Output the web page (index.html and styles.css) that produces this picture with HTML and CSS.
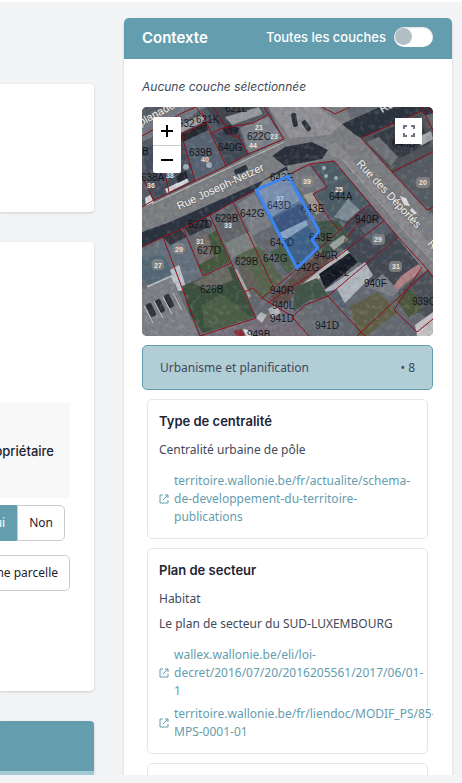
FILE: index.html
```html
<!DOCTYPE html>
<html lang="fr">
<head>
<meta charset="utf-8">
<meta name="viewport" content="width=device-width, initial-scale=1">
<title>Contexte</title>
<link rel="stylesheet" href="styles.css">
</head>
<body>
<div class="app">
  <main class="main">
    <section class="card card-summary"></section>
    <section class="card card-form">
      <div class="form-head">Propriétaire</div>
      <div class="choice">
        <button type="button" class="btn btn-on">Oui</button>
        <button type="button" class="btn btn-off">Non</button>
      </div>
      <button type="button" class="btn btn-add">Ajouter une parcelle</button>
    </section>
    <section class="card card-next"></section>
  </main>

  <aside class="panel">
    <header class="panel-head">
      <h2 class="panel-title">Contexte</h2>
      <label class="toggle">Toutes les couches <input type="checkbox" class="switch"></label>
    </header>
    <div class="panel-body">
      <p class="empty">Aucune couche sélectionnée</p>
      <div class="map">
        <svg class="map-view" viewBox="142 107 291 229" preserveAspectRatio="xMidYMid slice" role="img" aria-label="Carte des parcelles">
          <defs>
            <filter id="grain" x="0" y="0" width="100%" height="100%">
              <feTurbulence type="fractalNoise" baseFrequency="0.22" numOctaves="3" seed="7"/>
              <feColorMatrix values="0 0 0 0 0.05  0 0 0 0 0.06  0 0 0 0 0.08  2.4 0 0 0 -1.05"/>
            </filter>
            <filter id="glow" x="0" y="0" width="100%" height="100%">
              <feTurbulence type="fractalNoise" baseFrequency="0.2" numOctaves="3" seed="21"/>
              <feColorMatrix values="0 0 0 0 .8  0 0 0 0 .82  0 0 0 0 .84  0 2.4 0 0 -1.2"/>
            </filter>
            <filter id="soft"><feGaussianBlur stdDeviation="0.6"/></filter>
          </defs>
          <rect x="142" y="107" width="291" height="229" fill="#656a72"/>
          <g filter="url(#soft)">
            <!-- block north of Rue Joseph-Netzer -->
            <path fill="#555b66" d="M142 107H268L284 139 142 206z"/>
            <path fill="#737982" d="M142 118L170 107H205L180 124 142 142z"/>
            <path fill="#454e5c" d="M142 150L180 134 195 181 152 201z"/>
            <path fill="#596473" d="M184 138L207 128 226 166 196 180z"/>
            <path fill="#25272d" d="M178 135L206 122 208 130 183 142z"/>
            <path fill="#a7a5a3" d="M176 128L202 114 205 121 180 133z"/>
            <path fill="#3f4855" d="M213 134L238 127 247 154 227 165z"/>
            <path fill="#7d838a" d="M240 128L268 116 283 139 249 153z"/>
            <path fill="#42474f" d="M206 107H262L264 114 220 129z"/>
            <path fill="#969a9e" d="M225 117L259 107 263 114 232 125z"/>
            <path fill="#222630" d="M222 128l8-3 9 3-2 6-11 1z"/>
            <path fill="#d8dadd" d="M165 189L187 178 189 182 167 193zM145 198l5-3 4 7-8 4z"/>
            <path fill="#24272e" d="M176 176l10-5 2 7-10 5z"/>
            <!-- streets -->
            <path fill="#7d7e82" d="M142 208L284 139 268 107H345L361 138 433 217V286L398 237 334 161 304 166 257 189 142 246z"/>
            <path fill="#929196" d="M268 107H318L342 124 330 135 290 138z"/>
            <path fill="#8b8a8e" d="M318 150L336 142 433 247V262L370 190 342 160z"/>
            <path fill="#2c313c" d="M342 124L380 107H433V113L361 138 354 134z"/>
            <path fill="#2a2f3a" d="M272 156L285 147 312 142 328 150 322 159 285 166z"/>
            <path fill="#2b323f" d="M142 232L170 222 204 207 262 181 287 166 288 170 256 190 210 215 163 237 142 247z"/>
            <path fill="#8b8e92" d="M263 181L286 170 288 175 257 189z"/>
            <path stroke="#c2c2c2" fill="none" d="M152 204L284 142"/>
            <path stroke="#a6a6a8" fill="none" d="M343 160L402 228 433 262"/>
            <!-- block east -->
            <path fill="#4f5259" d="M361 138L422 111 433 129V214L392 172z"/>
            <path fill="#353b45" d="M372 136L418 116 430 143 396 160z"/>
            <path fill="#6f7278" d="M367 142l12-5 19 20-7 9z"/>
            <path fill="#a7aaad" d="M416 138l15-7 2 8-12 7z"/>
            <path fill="#575c63" d="M394 173L433 153V208L426 209z"/>
            <!-- central roofs -->
            <path fill="#72767c" d="M288 176L308 165 326 187 313 195 318 212z"/>
            <path fill="#a09b93" d="M303 195l10-3 9 18-6 5z"/>
            <path fill="#4e5d66" d="M311 165L334 161 370 203 346 224 328 216 314 194 327 187z"/>
            <path fill="#7f8d97" d="M334 217l14-18 12 11-13 11z"/>
            <path fill="#434a55" d="M346 222L370 204 398 237 360 263 338 245z"/>
            <path fill="#434953" d="M362 252L397 238 420 265 386 292 360 276z"/>
            <path fill="#59616d" d="M360 228l22-10 10 13-19 15z"/>
            <path fill="#b48385" d="M392 290C398 276 409 270 419 264l3 5c-8 10-18 13-25 23z"/>
            <path fill="#4b5158" d="M397 292L428 270 433 276V320L408 308z"/>
            <!-- terrace south of the street -->
            <path fill="#7b7f86" d="M237 204L255 194 272 225 252 236z"/>
            <path fill="#62656b" d="M213 217L233 205 248 236 224 243z"/>
            <path fill="#8e939a" d="M256 191L288 176 301 200 270 218z"/>
            <path fill="#3d4a61" d="M271 219L300 204 308 219 281 236z"/>
            <path fill="#a3acb6" d="M279 233L306 220 308 225 283 241z"/>
            <path fill="#41586a" d="M282 242L308 226 317 236 316 247 297 266z"/>
            <path fill="#4b5f4e" d="M271 252l12-8 13 22-8 8z"/>
            <!-- gardens -->
            <path fill="#42544a" d="M312 222l26-2 14 21-26 14-8-8 2-14z"/>
            <path fill="#9aa3a0" d="M329 245l14-10 5 4-14 11z"/>
            <path fill="#5f504b" d="M268 299L319 252 332 257 284 306z"/>
            <path fill="#b9bbb9" d="M301 285L346 249 350 253 306 290z"/>
            <path fill="#181d25" d="M319 274L349 253 358 262 325 289z"/>
            <path fill="#b1b7bf" d="M322 292L365 262 373 275 345 303 336 290z"/>
            <path fill="#59636f" d="M328 292l9-3 11 20-6-1z"/>
            <path fill="#425546" d="M295 287l22-9 12 19-20 3-16 12z"/>
            <path fill="#61614a" d="M349 307L378 292 398 312 367 336H359z"/>
            <path fill="#7b8086" d="M365 287l18-13 16 17-7 6-14-6z"/>
            <path fill="#6a6f76" d="M292 317L310 305 333 327 332 336H305z"/>
            <path fill="#4d583e" d="M396 300l17-10 10 18-14 10z"/>
            <path fill="#c5c3c6" d="M415 325l18-13v24h-16z"/>
            <!-- parcels to the south-west -->
            <path fill="#65717d" d="M142 252L163 239 182 228 204 275 172 291 142 281z"/>
            <path fill="#536775" d="M142 260L163 254 172 273 149 284 142 278z"/>
            <path fill="#34363d" d="M163 237L180 228 187 237 170 245zM184 228L206 217 210 226 190 236z"/>
            <path fill="#83705f" d="M190 240l16-7 10 22-16 8z" opacity=".5"/>
            <path fill="#45583e" d="M208 235L217 230 230 262 203 275 198 265 214 257z"/>
            <path fill="#bfc6cc" d="M170 270L179 265 187 290 178 291zM147 286l25-11 3 8-24 10z"/>
            <path fill="#3b513d" d="M182 286L205 277 232 266 255 317 203 333 190 315z"/>
            <path fill="#6b6a62" d="M192 283L228 267 233 280 208 290z"/>
            <path fill="#4e5f46" d="M202 306l18-12 16 10 14 13-31 13-15-4z"/>
            <path fill="#586650" d="M236 256L259 245 283 279 266 298 246 290z"/>
            <path fill="#7c8381" d="M225 243l25-12 7 15-25 12z"/>
            <path fill="#64625a" d="M237 262l7-4 17 31-10 4z"/>
            <path fill="#a4a7a9" d="M234 270l3-1 14 27-2 2z"/>
            <path fill="#7e8086" d="M142 290L171 277 199 336H142z"/>
            <g fill="#2c3139">
              <rect x="148" y="303" width="6" height="14" rx="2" transform="rotate(-25 151 310)"/>
              <rect x="157" y="299" width="6" height="14" rx="2" transform="rotate(-25 160 306)"/>
              <rect x="166" y="294" width="6" height="14" rx="2" transform="rotate(-25 169 301)"/>
              <rect x="292" y="113" width="5" height="14" rx="2" transform="rotate(-10 294 120)"/>
              <rect x="304" y="120" width="5" height="12" rx="2" transform="rotate(-35 306 126)"/>
              <rect x="234" y="167" width="14" height="6" rx="2" transform="rotate(-25 241 170)"/>
            </g>
            <path stroke="#c8c8ca" fill="none" d="M144 306l9 17M154 301l9 17M163 297l9 17M173 293l9 17"/>
            <path fill="#74707a" d="M205 333L256 318 290 302 306 336H205z"/>
            <path fill="#b5b7ba" d="M256 318l5-6 6 3-5 8zM268 309l8-4 5 8-9 4z"/>
            <path fill="#8c2c36" d="M234 331l7-2 4 6-8 3z"/>
            <path fill="#dfe1e5" d="M400 196l6 2 4 8-6-1zM412 208l5 5-3 2-4-5zM243 329l5 1 5 6h-7z"/>
            <g fill="#9fadb9"><circle cx="324" cy="168" r="2"/><circle cx="326" cy="176" r="2"/><circle cx="336" cy="178" r="2"/><circle cx="186" cy="167" r="3"/><circle cx="209" cy="165" r="3"/></g>
          </g>
          <rect x="142" y="107" width="291" height="229" filter="url(#grain)" opacity=".18"/>
          <rect x="142" y="107" width="291" height="229" filter="url(#glow)" opacity=".18"/>

          <g class="bounds">
            <path d="M142 136L182 113 196 107M142 176L154 201M142 207L152 201 195 181 226 166 248 154 284 139 264 107M155 130L169 192M180 130L195 181M202 113L226 166M238 136L248 154M176 137L213 119M210 134L223 128 253 123 268 115M196 107L202 116M213 107L232 136H240"/>
            <path d="M142 247L163 237 183 228 210 215 233 202 256 190M292 173L310 164 334 161 370 204 398 237 428 270 433 277M310 164L327 187 313 194 328 217 340 231M370 204L355 215"/>
            <path d="M322 107L335 114 350 107M361 138L422 111M422 107L433 131M361 138L392 172 427 210 433 207M392 172L433 152M427 107L433 113"/>
            <path d="M163 237L200 336 256 318 210 215M183 228L203 276 231 263M233 202L273 286M244 292L253 288 262 298 290 275 357 215M262 298L290 315M268 303L340 255 385 220M292 317L305 305 328 296 398 237M292 317L309 336M328 296L360 331 365 336M357 336L428 270M422 267L394 310 417 332 433 319M367 213L344 241"/>
          </g>

          <g class="badges">
            <rect x="301" y="176" width="13" height="11" rx="4"/><rect x="416" y="177" width="14" height="11" rx="4"/>
            <rect x="152" y="259" width="12" height="11" rx="4"/><rect x="173" y="243" width="12" height="11" rx="4"/>
            <rect x="372" y="234" width="13" height="11" rx="4"/><rect x="389" y="261" width="13" height="11" rx="4"/>
          </g>
          <g class="numbers">
            <text x="307" y="184">39</text><text x="423" y="185">20</text><text x="158" y="268">27</text>
            <text x="179" y="252">29</text><text x="200" y="244">31</text><text x="228" y="228">33</text>
            <text x="378" y="242">29</text><text x="396" y="269">31</text><text x="205" y="162">40</text>
            <text x="170" y="178">38</text><text x="151" y="188">36</text><text x="253" y="148">44</text>
            <text x="259" y="130">21</text><text x="274" y="139">23</text><text x="339" y="192">25</text>
            <text x="280" y="201">37</text>
          </g>
          <g class="parcel-labels">
            <text x="225" y="112">621L</text><text x="196" y="123">621K</text><text x="178" y="127">632</text>
            <text x="247" y="140">622C</text><text x="189" y="156">639B</text><text x="218" y="151">640G</text>
            <text x="142" y="155">B</text><text x="141" y="181">638A</text><text x="270" y="181">643E</text>
            <text x="267" y="209">643D</text><text x="240" y="217">642G</text><text x="215" y="222">629B</text>
            <text x="188" y="228">627D</text><text x="197" y="254">627D</text><text x="235" y="265">629B</text>
            <text x="263" y="262">642G</text><text x="200" y="293">626B</text><text x="270" y="246">643D</text>
            <text x="301" y="212">643E</text><text x="329" y="200">644A</text><text x="355" y="223">940R</text>
            <text x="309" y="241">643E</text><text x="314" y="259">940R</text><text x="295" y="271">642G</text>
            <text x="327" y="276">940L</text><text x="364" y="287">940F</text><text x="270" y="294">940R</text>
            <text x="272" y="309">940L</text><text x="270" y="322">941D</text><text x="315" y="329">941D</text>
            <text x="412" y="305">939C</text><text x="247" y="338">949B</text><text x="392" y="147">646B</text>
          </g>
          <g class="streets">
            <text transform="translate(179 210) rotate(-25)">Rue Joseph-Netzer</text>
            <text transform="translate(356 164) rotate(47)">Rue des Déportés</text>
            <text transform="translate(427 244) rotate(47)">Rue</text>
            <text transform="translate(141 126) rotate(-28)">planade</text>
            <text transform="translate(382 113) rotate(-28)">Ru</text>
          </g>
          <path class="selected" d="M256 190L288 176 319 231 312 240 318 248 297 268z"/>
        </svg>
        <div class="zoom">
          <button type="button" class="zoom-btn" aria-label="Zoom avant"><svg viewBox="0 0 12 12" width="12" height="12"><path d="M6 0v12M0 6h12"/></svg></button>
          <button type="button" class="zoom-btn" aria-label="Zoom arrière"><svg viewBox="0 0 12 12" width="12" height="12"><path d="M0 6h12"/></svg></button>
        </div>
        <button type="button" class="full" aria-label="Plein écran"><svg viewBox="0 0 14 14" width="14" height="14"><path d="M2 5V2h3M9 2h3v3M12 9v3H9M5 12H2V9"/></svg></button>
      </div>

      <button type="button" class="group"><span>Urbanisme et planification</span><span>• 8</span></button>

      <div class="layers">
        <article class="layer">
          <h3 class="layer-title">Type de centralité</h3>
          <p class="layer-text">Centralité urbaine de pôle</p>
          <div class="links">
            <a class="link" href="#"><svg class="ext" viewBox="0 0 10 10" width="10" height="10"><path d="M4 1H1v8h8V6M6 1h3v3M9 1L4 6"/></svg><span>territoire.wallonie.be/fr/actualite/schema-<br>de-developpement-du-territoire-<br>publications</span></a>
          </div>
        </article>
        <article class="layer">
          <h3 class="layer-title">Plan de secteur</h3>
          <p class="layer-text">Habitat</p>
          <p class="layer-text">Le plan de secteur du SUD-LUXEMBOURG</p>
          <div class="links">
            <a class="link" href="#"><svg class="ext" viewBox="0 0 10 10" width="10" height="10"><path d="M4 1H1v8h8V6M6 1h3v3M9 1L4 6"/></svg><span>wallex.wallonie.be/eli/loi-<br>decret/2016/07/20/2016205561/2017/06/01-<br>1</span></a>
            <a class="link" href="#"><svg class="ext" viewBox="0 0 10 10" width="10" height="10"><path d="M4 1H1v8h8V6M6 1h3v3M9 1L4 6"/></svg><span>territoire.wallonie.be/fr/liendoc/MODIF_PS/85-<br>MPS-0001-01</span></a>
          </div>
        </article>
        <article class="layer layer-rest"></article>
      </div>
    </div>
  </aside>
</div>
</body>
</html>
```

FILE: styles.css
```css
* { box-sizing: border-box; }

body {
  margin: 0;
  background: #f2f4f6;
  color: #3f4a5a;
  font: 12px/18px "Noto Sans", "Open Sans", sans-serif;
}

button { font: inherit; color: inherit; margin: 0; cursor: pointer; }
h2, h3, p { margin: 0; }

.app {
  display: grid;
  grid-template-columns: 94px minmax(0, 1fr);
  gap: 30px;
  height: calc(100vh - 8px);
  padding-right: 10px;
  border-top: 2px solid #fff;
  overflow: hidden;
}

.main {
  display: flex;
  flex-direction: column;
  gap: 30px;
  padding-top: 82px;
}

.card {
  flex: none;
  background: #fff;
  border-radius: 0 4px 4px 0;
  box-shadow: 0 1px 3px rgba(0, 0, 0, .16);
}
.card-summary { min-height: 128px; }
.card-form {
  display: flex;
  flex-direction: column;
  align-items: flex-end;
  min-height: 449px;
  padding: 161px 24px 100px 0;
  color: #1b222c;
}
.card-next {
  min-height: 100px;
  background: #a3c9d5;
  border-top: 50px solid #649dae;
}

.form-head {
  display: flex;
  align-items: center;
  justify-content: flex-end;
  width: 100%;
  height: 95px;
  padding-right: 16px;
  background: #f8f8f8;
  font: 500 13px/18px Inter, sans-serif;
}

.choice { display: flex; margin: 7px 5px 14px 0; }
.btn {
  flex: none;
  height: 36px;
  padding: 0 11px;
  background: #fff;
  border: 1px solid #c9cbce;
  border-radius: 5px;
  white-space: nowrap;
}
.btn-on { background: #649dae; border-color: #649dae; color: #fff; border-radius: 5px 0 0 5px; }
.btn-off { border-radius: 0 5px 5px 0; }

.panel {
  align-self: start;
  margin-top: 16px;
  background: #fff;
  border-radius: 5px;
  box-shadow: 0 1px 3px rgba(0, 0, 0, .16);
}
.panel-head {
  display: flex;
  align-items: center;
  justify-content: space-between;
  height: 41px;
  padding: 0 19px 4px 18px;
  background: #649dae;
  border-radius: 5px 5px 0 0;
  color: #fff;
  font-family: Inter, sans-serif;
}
.panel-title { padding-top: 3px; font-size: 15px; font-weight: 600; }
.toggle { display: flex; align-items: center; gap: 8px; font-size: 13px; font-weight: 500; }
.switch {
  appearance: none;
  width: 39px;
  height: 20px;
  margin: 0;
  padding: 1px;
  background: #fff;
  border-radius: 10px;
  box-shadow: inset 0 1px 2px rgba(0, 0, 0, .12);
}
.switch::before {
  content: "";
  display: block;
  width: 17px;
  height: 17px;
  border-radius: 50%;
  background: #b2bdc4;
}
.switch:checked::before { margin-left: auto; }

.panel-body { padding: 18px 19px 18px 18px; }
.empty { margin-bottom: 10px; font: italic 12px/20px Inter, sans-serif; }

.map { position: relative; overflow: hidden; border-radius: 5px; }
.map-view { display: block; width: 100%; height: auto; }
.bounds path { fill: none; stroke: #8f1118; stroke-width: 1; }
.parcel-labels { font: 10px "Liberation Sans", sans-serif; fill: #0b0d12; fill-opacity: .9; }
.badges rect { fill: #858482; fill-opacity: .85; }
.numbers { font: bold 7px "Liberation Sans", sans-serif; fill: #e4e4e2; text-anchor: middle; }
.streets { font: 11px "Liberation Sans", sans-serif; fill: #f0f0ee; stroke: #666; stroke-opacity: .5; stroke-width: 2; paint-order: stroke; }
.selected { fill: #3388ff; fill-opacity: .2; stroke: #3a86f5; stroke-width: 3; stroke-linejoin: round; }

.zoom { position: absolute; top: 10px; left: 11px; width: 28px; border-radius: 2px; overflow: hidden; }
.zoom-btn {
  display: grid;
  place-items: center;
  width: 28px;
  height: 28px;
  padding: 0;
  background: #fff;
  border: 0;
}
.zoom-btn + .zoom-btn { border-top: 1px solid #ccc; }
.zoom-btn path { stroke: #000; stroke-width: 2; }
.full {
  position: absolute;
  top: 11px;
  right: 11px;
  display: grid;
  place-items: center;
  width: 27px;
  height: 26px;
  padding: 0;
  background: #fff;
  border: 0;
}
.full path { fill: none; stroke: #6b7480; stroke-width: 2; }

.group {
  display: flex;
  align-items: center;
  justify-content: space-between;
  width: 100%;
  height: 45px;
  margin: 9px 0;
  padding: 0 17px;
  background: #b1cdd6;
  border: 1px solid #649dae;
  border-radius: 5px;
}

.layers { display: flex; flex-direction: column; gap: 9px; padding: 0 5px; overflow: hidden; }
.layer {
  padding: 12px 11px;
  border: 1px solid #e4e6eb;
  border-radius: 5px;
}
.layer-title {
  margin-bottom: 11px;
  color: #1d2433;
  font: 600 13px/18px Inter, sans-serif;
}
.layer-text { margin-bottom: 7px; white-space: nowrap; }
.links { display: flex; flex-direction: column; gap: 5px; margin-top: 13px; }
.link { display: flex; align-items: center; gap: 5px; color: #649dae; text-decoration: none; white-space: nowrap; }
.ext { flex: none; }
.ext path { fill: none; stroke: #649dae; stroke-width: 1; }
.layer-rest { min-height: 120px; }
```
